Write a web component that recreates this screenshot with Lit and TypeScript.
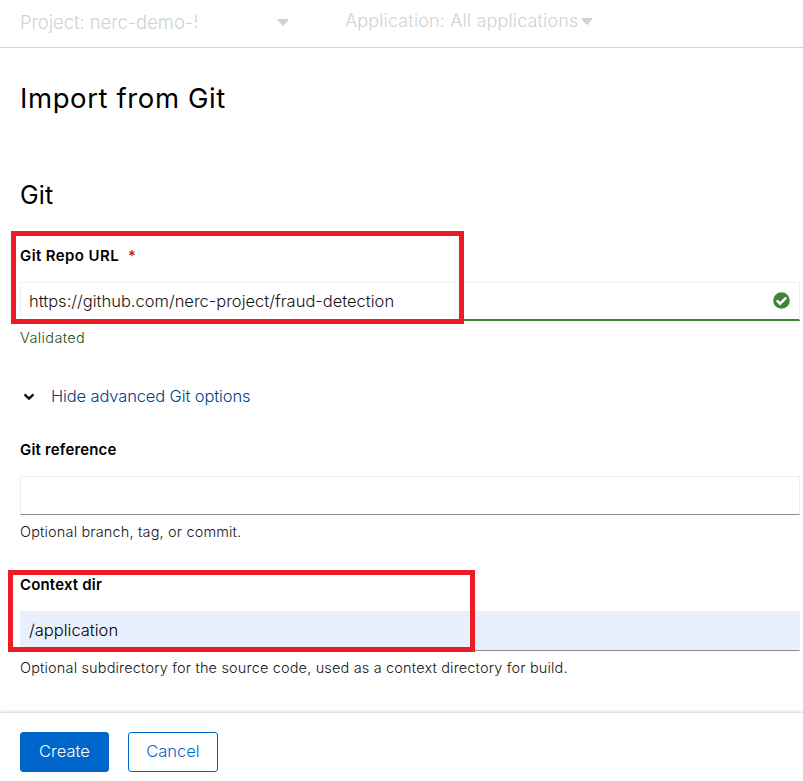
import { LitElement, html, css } from "lit";
import { customElement } from "lit/decorators.js";

@customElement("app-root")
export class AppRoot extends LitElement {
  static styles = css`
    :host { display: block; width: 803px; height: 781px; overflow: hidden; background: #fff; color: #151515; font-family: Inter, "Liberation Sans", sans-serif; font-weight: 350; }
    *, *::after { box-sizing: border-box; }
    .page { height: 781px; display: flex; flex-direction: column; white-space: nowrap; }
    .bar { height: 48px; flex: none; border-bottom: 1px solid #d2d2d2; display: flex; align-items: flex-start; padding-left: 20px; color: #d2d2d2; font-size: 18px; line-height: 24px; }
    .project { width: 177px; height: 24px; overflow: hidden; margin-top: 10px; font-size: 18.5px; letter-spacing: -0.06px; }
    .caret { width: 12px; height: 7px; fill: #d2d2d2; flex: none; }
    .caret.first { margin: 19px 56px 0 80px; }
    .application { width: 236px; margin-top: 9px; letter-spacing: 0.15px; }
    .caret.second { margin-top: 18px; }
    main { flex: 1; padding: 0 3px 0 20px; display: flex; flex-direction: column; }
    h1, h2 { margin: 0; color: #000; font-weight: 400; }
    h1 { margin-top: 32px; height: 36px; line-height: 36px; font-size: 27.5px; letter-spacing: 0.6px; }
    h2 { margin-top: 64px; height: 30px; line-height: 30px; font-size: 25px; letter-spacing: 0.2px; }
    .label { height: 20px; line-height: 20px; font-size: 15px; font-weight: 600; color: #000; letter-spacing: 0.17px; }
    .label.repo { margin-top: 36px; letter-spacing: 0.4px; }
    .label.ref { margin-top: 31px; }
    .label.ctx { margin-top: 33px; }
    .star { color: #c9190b; margin-left: 9px; font-weight: 500; }
    .field { height: 39px; margin-top: 16px; border: 1px solid #f0f0f0; border-bottom-color: #8a8d90; padding: 0 9px 0 8px; display: flex; align-items: center; justify-content: space-between; font-size: 16.5px; }
    .field.valid { border-bottom: 2px solid #3e8635; }
    .field.filled { height: 40px; padding-bottom: 2px; background: #e8f0fe; color: #000; border-color: #e8eefb; border-bottom-color: #8a8d90; }
    .check { width: 17px; height: 17px; margin-top: -2px; }
    .help { height: 20px; margin-top: 7px; line-height: 20px; font-size: 14.5px; letter-spacing: 0.16px; }
    .help.ok { color: #1e4f18; letter-spacing: 0.38px; }
    .toggle { margin-top: 36px; height: 24px; display: flex; align-items: center; font-size: 16.5px; letter-spacing: -0.13px; color: #004080; }
    .chevron { width: 12px; height: 8px; margin: 2px 16px 0 3px; }
    .label.ref { margin-top: 32px; }
    footer { flex: none; height: 68px; display: flex; gap: 19px; padding: 19px 20px 0; background: #fff; box-shadow: 0 -1px 3px #0003; }
    button { height: 40px; padding: 0 0 2px; border: 1px solid #06c; border-radius: 3px; font: inherit; font-size: 16.5px; color: #06c; background: #fff; }
    .create { width: 89px; background: #06c; color: #fff; }
    .cancel { width: 90px; }
    .marked { position: relative; display: flow-root; }
    .marked::after { content: ""; position: absolute; border: 5px solid #ed1c24; pointer-events: none; }
    .repo-group::after { left: -9px; top: 21px; width: 453px; height: 93px; }
    .ctx-group::after { left: -12px; top: 28px; width: 467px; height: 82px; }
  `;

  render() {
    return html`<div class="page">
      <div class="bar">
        <div class="project">Project: nerc-demo-5</div>
        <svg class="caret first" viewBox="0 0 12 7"><path d="M1 0h10q1 0 .5 1L7 6.2q-1 1-2 0L.5 1Q0 0 1 0z" /></svg>
        <div class="application">Application: All applications</div>
        <svg class="caret second" viewBox="0 0 12 7"><path d="M1 0h10q1 0 .5 1L7 6.2q-1 1-2 0L.5 1Q0 0 1 0z" /></svg>
      </div>
      <main>
        <h1>Import from Git</h1>
        <h2>Git</h2>
        <div class="marked repo-group">
          <div class="label repo">Git Repo URL<span class="star">*</span></div>
          <div class="field valid">
            <span>https://github.com/nerc-project/fraud-detection</span>
            <svg class="check" viewBox="0 0 17 17"><circle cx="8.5" cy="8.5" r="8.3" fill="#3e8635" /><path d="M3.800 8.400l3.300 3.300 6.100-6" fill="none" stroke="#fff" stroke-width="2.5" /></svg>
          </div>
        </div>
        <div class="help ok">Validated</div>
        <div class="toggle">
          <svg class="chevron" viewBox="0 0 12 8"><path d="M1.500 1.300L6 5.600l4.500-4.300" fill="none" stroke="#151515" stroke-width="2.500" /></svg>
          <span>Hide advanced Git options</span>
        </div>
        <div class="label ref">Git reference</div>
        <div class="field"></div>
        <div class="help">Optional branch, tag, or commit.</div>
        <div class="marked ctx-group">
          <div class="label ctx">Context dir</div>
          <div class="field filled"><span>/application</span></div>
        </div>
        <div class="help">Optional subdirectory for the source code, used as a context directory for build.</div>
      </main>
      <footer>
        <button class="create">Create</button>
        <button class="cancel">Cancel</button>
      </footer>
    </div>`;
  }
}
